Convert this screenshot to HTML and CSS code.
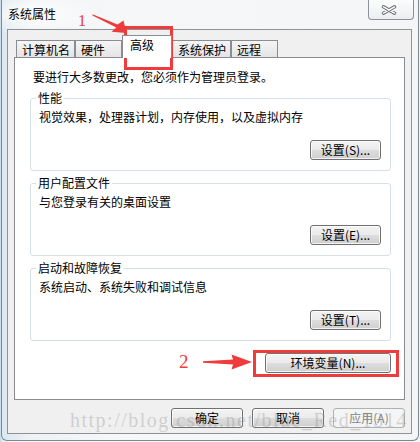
FILE: index.html
```html
<!DOCTYPE html>
<html lang="zh-CN">
<head>
<meta charset="utf-8">
<title>系统属性</title>
<link rel="stylesheet" href="styles.css">
</head>
<body>
<div class="window">
  <div class="titlebar">
    <span class="title">系统属性</span>
    <button class="close" aria-label="关闭">
      <svg width="16" height="10" viewBox="0 0 16 10"><path d="M2.5 1.8 L13.5 8.2 M13.5 1.8 L2.5 8.2" stroke="#6d7279" stroke-width="3.4" stroke-linecap="round" fill="none"/><path d="M2.5 1.8 L13.5 8.2 M13.5 1.8 L2.5 8.2" stroke="#ffffff" stroke-width="1.4" stroke-linecap="round" fill="none"/></svg>
    </button>
  </div>
  <div class="client">
    <div class="tabs">
      <div class="tab">计算机名</div>
      <div class="tab">硬件</div>
      <div class="tab active">高级</div>
      <div class="tab">系统保护</div>
      <div class="tab">远程</div>
    </div>
    <div class="panel">
      <p class="note">要进行大多数更改，您必须作为管理员登录。</p>
      <fieldset class="group">
        <legend>性能</legend>
        <p>视觉效果，处理器计划，内存使用，以及虚拟内存</p>
        <div class="actions"><button class="btn">设置(S)...</button></div>
      </fieldset>
      <fieldset class="group">
        <legend>用户配置文件</legend>
        <p>与您登录有关的桌面设置</p>
        <div class="actions"><button class="btn">设置(E)...</button></div>
      </fieldset>
      <fieldset class="group">
        <legend>启动和故障恢复</legend>
        <p>系统启动、系统失败和调试信息</p>
        <div class="actions"><button class="btn">设置(T)...</button></div>
      </fieldset>
      <div class="env-row"><button class="btn env">环境变量(N)...</button></div>
    </div>
    <div class="footer">
      <button class="btn wide">确定</button>
      <button class="btn wide">取消</button>
      <button class="btn wide" disabled>应用(A)</button>
    </div>
  </div>
</div>

<div class="mark-box box-tab"></div>
<div class="mark-box box-env"></div>
<span class="mark-num num-1">1</span>
<span class="mark-num num-2">2</span>
<svg class="arrows" width="420" height="442" viewBox="0 0 420 442">
  <polygon points="92.5,14.3 117.5,24.6 123.5,20.5 126.5,33 111.5,31.8 116.3,27.4 92.5,15.6" fill="#ef3b3b"/>
  <polygon points="203,361.2 233,359.6 231.5,354.5 252,362 231.5,369.5 233,364.4 203,362.8" fill="#ef3b3b"/>
</svg>
<span class="watermark">http://blog.csdn.net/blue_Red_1314</span>
</body>
</html>
```
FILE: styles.css
```css
* { box-sizing: border-box; }

html, body { margin: 0; padding: 0; }

body {
  position: relative;
  width: 420px;
  height: 442px;
  overflow: hidden;
  background: linear-gradient(to right, #c7dbe8 0px, #e6eef4 3px, #f3f5f7 8px);
  font-family: "Noto Sans CJK SC", "Noto Sans", sans-serif;
  font-size: 12px;
  line-height: 14px;
  color: #000;
}

.window {
  margin-left: 1px;
  width: 418px;
  height: 441px;
  border: 1px solid #7f8790;
  border-top: none;
  border-radius: 0 0 6px 6px;
  background:
    radial-gradient(ellipse 70px 22px at 30px 14px, rgba(255,255,255,0.95), rgba(255,255,255,0) 100%),
    linear-gradient(to right, #dbe7ef 0px, #eff3f6 30px, #f6f7f8 120px, #f4f5f6 100%);
}

.titlebar {
  height: 29px;
  display: flex;
  justify-content: space-between;
  align-items: flex-start;
  padding: 0 4px 0 6px;
}

.title {
  margin-top: 7px;
  color: #000;
}

.close {
  width: 46px;
  height: 20px;
  padding: 0;
  border: 1px solid #8c9197;
  border-top: none;
  border-radius: 0 0 4px 4px;
  background: linear-gradient(#fbfcfc, #eceef1);
  display: flex;
  align-items: center;
  justify-content: center;
}

.close svg { margin-left: -4px; margin-top: 1px; }

.client {
  margin-left: 5px;
  width: 405px;
  height: 405px;
  border: 1px solid #8d9198;
  background: #f0f0f0;
  padding: 0 6px 5px;
  display: flex;
  flex-direction: column;
}

.tabs {
  display: flex;
  align-items: flex-end;
  height: 22px;
  margin-top: 5px;
  padding-left: 2px;
}

.tab {
  height: 17px;
  min-width: 47px;
  padding: 2px 4px 0 5px;
  border: 1px solid #898c95;
  border-bottom: none;
  background: linear-gradient(#f5f5f5, #e4e4e4);
  white-space: nowrap;
}

.tab.active {
  position: relative;
  z-index: 1;
  height: 23px;
  min-width: 50px;
  margin-bottom: -1px;
  padding-left: 7px;
  background: #fff;
}

.panel {
  height: 343px;
  border: 1px solid #898c95;
  background: #fff;
  padding: 12px 13px 0 15px;
  display: flex;
  flex-direction: column;
}

.note { margin: 0 0 7px 3px; }

.group {
  margin: 0 0 5px;
  padding: 0 9px 10px 8px;
  border: 1px solid #d5dfe5;
  border-radius: 3px;
  min-width: 0;
}

.group legend {
  padding: 0 2px;
  margin-left: -3px;
  line-height: 14px;
}

.group p { margin: 5px 0 16px; }

.actions {
  display: flex;
  justify-content: flex-end;
}

.btn {
  height: 20px;
  width: 71px;
  padding: 0;
  font-family: inherit;
  font-size: 12px;
  line-height: 14px;
  color: #000;
  border: 1px solid #707070;
  border-radius: 3px;
  background: linear-gradient(#f3f3f3 0%, #ebebeb 48%, #dddddd 52%, #cfcfcf 100%);
  box-shadow: inset 0 0 0 1px rgba(255,255,255,0.75);
  white-space: nowrap;
}

.btn:disabled {
  border-color: #adb2b5;
  background: #f4f4f4;
  color: #838383;
  box-shadow: none;
}

.env-row {
  display: flex;
  justify-content: flex-end;
  margin-top: 7px;
}

.btn.env { width: 126px; }

.footer {
  display: flex;
  justify-content: flex-end;
  gap: 9px;
  margin-top: 8px;
}

.btn.wide { width: 72px; }

/* annotations overlaid on the screenshot */
.mark-box {
  position: absolute;
  border: 3px solid #ef3b3b;
}

.box-tab { left: 124px; top: 26px; width: 49px; height: 44px; }
.box-env { left: 253px; top: 350px; width: 146px; height: 27px; }

.mark-num {
  position: absolute;
  font-family: "Liberation Serif", serif;
  color: #ef3b3b;
}

.num-1 { left: 78px; top: 13px; font-size: 16px; line-height: 16px; }
.num-2 { left: 179px; top: 352px; font-size: 19px; line-height: 19px; }

.arrows {
  position: absolute;
  left: 0;
  top: 0;
}

.watermark {
  position: absolute;
  left: 70px;
  top: 410px;
  font-family: "Liberation Serif", serif;
  font-size: 20px;
  line-height: 20px;
  letter-spacing: 1.5px;
  color: rgba(140,140,140,0.34);
  white-space: nowrap;
}
```
